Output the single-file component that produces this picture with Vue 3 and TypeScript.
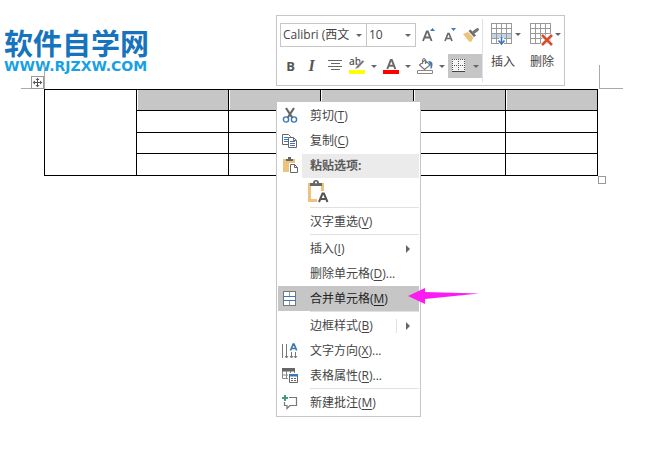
<script setup lang="ts">
import { ref } from 'vue'

interface MenuItem {
  id: string
  label: string
  key: string
  tail?: string
  submenu?: boolean
  split?: boolean
  active?: boolean
}

const fontName = ref('Calibri (西文')
const fontSize = ref('10')

const groups: MenuItem[][] = [
  [{ id: 'reconvert', label: '汉字重选', key: 'V' }],
  [
    { id: 'insert', label: '插入', key: 'I', submenu: true },
    { id: 'delete', label: '删除单元格', key: 'D', tail: '...' },
    { id: 'merge', label: '合并单元格', key: 'M', active: true },
  ],
  [
    { id: 'border', label: '边框样式', key: 'B', submenu: true, split: true },
    { id: 'direction', label: '文字方向', key: 'X', tail: '...' },
    { id: 'props', label: '表格属性', key: 'R', tail: '...' },
  ],
  [{ id: 'comment', label: '新建批注', key: 'M' }],
]
</script>

<template>
  <main class="page">
    <header class="logo">
      <div class="logo-name">软件自学网</div>
      <div class="logo-url">WWW.RJZXW.COM</div>
    </header>

    <section class="document">
      <table class="grid" aria-label="文档表格">
        <tbody>
          <tr v-for="r in 4" :key="r">
            <td v-if="r === 1" rowspan="4"></td>
            <td v-for="c in 5" :key="c" :class="{ selected: r === 1 }"></td>
          </tr>
        </tbody>
      </table>
      <span class="corner corner-left"></span>
      <span class="corner corner-right"></span>
      <button class="move-handle" type="button" aria-label="移动表格">
        <svg width="11" height="11" viewBox="0 0 11 11">
          <path d="M5.500 2v7M2 5.500h7" stroke="#555" fill="none" />
          <path d="M5.500 .7 7.500 3h-4zM5.500 10.300 7.500 8h-4zM.7 5.500 3 3.500v4zM10.300 5.500 8 3.500v4z" fill="#555" />
        </svg>
      </button>
      <span class="size-handle"></span>
    </section>

    <div class="toolbar" role="toolbar" aria-label="浮动工具栏">
      <div class="format">
        <div class="row fields">
          <label class="field font-field">
            <select v-model="fontName" aria-label="字体"><option>Calibri (西文</option></select>
            <i class="caret"></i>
          </label>
          <label class="field size-field">
            <select v-model="fontSize" aria-label="字号"><option>10</option></select>
            <i class="caret"></i>
          </label>
          <button class="tool" type="button" aria-label="增大字号">
            <svg width="16" height="16" viewBox="0 0 16 16">
              <path d="M2 14 5.800 4.500h1L10.600 14M3.500 10.500h6" fill="none" stroke="#6a6a6a" stroke-width="1.900" />
              <path d="M9 4 11.500 1 14 4z" fill="#3b78b5" />
            </svg>
          </button>
          <button class="tool" type="button" aria-label="减小字号">
            <svg width="16" height="16" viewBox="0 0 16 16">
              <path d="M3 14 6 6.500h1L10 14M4 11.500h5" fill="none" stroke="#6a6a6a" stroke-width="1.700" />
              <path d="M9 1 11.500 4 14 1z" fill="#3b78b5" />
            </svg>
          </button>
          <button class="tool" type="button" aria-label="格式刷">
            <svg width="17" height="16" viewBox="0 0 17 16">
              <path d="M0 7 5 5 10.500 10.500 8 15 6 14.500z" fill="#edc27c" />
              <path d="M5.500 4 7.500 2.500 13 8.500 11 10z" fill="#6a6a6a" />
              <path d="M10.500 5.500 14.500 2.500" stroke="#777" stroke-width="3" stroke-linecap="round" />
            </svg>
          </button>
        </div>
        <div class="row buttons">
          <button class="letter bold" type="button" aria-label="加粗">B</button>
          <button class="letter italic" type="button" aria-label="倾斜">I</button>
          <button class="tool align" type="button" aria-label="居中">
            <svg width="15" height="16" viewBox="0 0 15 16" shape-rendering="crispEdges">
              <path d="M1 2.500h14M4 5.500h9M1 8.500h14M4 11.500h9" stroke="#666" />
            </svg>
          </button>
          <button class="tool drop" type="button" aria-label="突出显示">
            <svg class="marker" width="16" height="18" viewBox="0 0 16 18">
              <text x="0" y="8" class="glyph-ab">ab</text>
              <path d="M5.500 12.500 7.500 9 13.500 3 15.500 4.500 9.500 11z" fill="#777" stroke="#fff" stroke-width=".7" />
              <path d="M0 13h16v4H0z" fill="#ffff00" />
            </svg>
            <i class="caret"></i>
          </button>
          <button class="tool drop" type="button" aria-label="字体颜色">
            <svg width="16" height="18" viewBox="0 0 16 18">
              <path d="M4.300 12 7.800 3h1L12.300 12M5.500 8.800h6" fill="none" stroke="#6a6a6a" stroke-width="2" />
              <path d="M0 13h16v4H0z" fill="#ff0000" />
            </svg>
            <i class="caret"></i>
          </button>
          <button class="tool drop" type="button" aria-label="底纹">
            <svg width="16" height="18" viewBox="0 0 16 18">
              <path d="M2.500 8 8 3l5 5-5.500 4.500zM5.500 7V3q1.500-3 3 0v4" fill="#fff" stroke="#777" stroke-width="1.200" />
              <path d="M11 4q5 0 4.500 4 0 3-2 4V8z" fill="#3b78b5" />
              <path d="M.5 13.500h15v3H.5z" fill="#fff" stroke="#888" />
            </svg>
            <i class="caret"></i>
          </button>
          <button class="tool drop pressed" type="button" aria-label="边框">
            <svg width="16" height="16" viewBox="0 0 16 16" shape-rendering="crispEdges">
              <path d="M1 1h13v12H1z" fill="#f4f4f4" />
              <path d="M1 1.500h13M1 7.500h13M1.500 1v12M7.500 1v12M13.500 1v12" stroke="#555" stroke-dasharray="1 1" />
              <path d="M1 13.500h13" stroke="#444" />
            </svg>
            <i class="caret"></i>
          </button>
        </div>
      </div>
      <div class="table-tools">
        <button class="big" type="button">
          <span class="big-icon">
            <svg width="22" height="23" viewBox="0 0 22 23">
              <path d="M1 11h20v5H1z" fill="#c2d4e9" />
              <path d="M.5.5h20v20H.5zM5.500.5v20M10.500.5v20M15.500.5v20M.5 5.500h20M.5 10.500h20M.5 15.500h20" fill="none" stroke="#999" shape-rendering="crispEdges" />
              <path d="M8 15h5v7H8z" fill="#fff" />
              <path d="M10.500 14v7M7.500 17.500l3 3.500 3-3.500" fill="none" stroke="#3b78b5" stroke-width="1.600" />
            </svg>
            <i class="caret"></i>
          </span>
          <span>插入</span>
        </button>
        <button class="big" type="button">
          <span class="big-icon">
            <svg width="23" height="23" viewBox="0 0 23 23">
              <path d="M.5.5h20v20H.5zM5.500.5v20M10.500.5v20M15.500.5v20M.5 5.500h20M.5 10.500h20M.5 15.500h20" fill="none" stroke="#999" shape-rendering="crispEdges" />
              <path d="M12 12 22 22M22 12 12 22" stroke="#fff" stroke-width="4.500" />
              <path d="M12 12 22 22M22 12 12 22" stroke="#d2502d" stroke-width="2.600" />
            </svg>
            <i class="caret"></i>
          </span>
          <span>删除</span>
        </button>
      </div>
    </div>

    <nav class="menu" aria-label="快捷菜单">
      <button class="item" type="button">
        <span class="icon">
          <svg width="16" height="17" viewBox="0 0 16 17">
            <path d="M4 1 10.500 11M12 1 5.500 11" stroke="#666" stroke-width="2.200" />
            <circle cx="4" cy="12.500" r="2.600" fill="none" stroke="#3b78b5" stroke-width="1.400" />
            <circle cx="12" cy="12.500" r="2.600" fill="none" stroke="#3b78b5" stroke-width="1.400" />
          </svg>
        </span>
        <span>剪切(<u>T</u>)</span>
      </button>
      <button class="item" type="button">
        <span class="icon">
          <svg width="16" height="16" viewBox="0 0 16 16">
            <path d="M.5 1.500h6l2 2v8h-8z" fill="#fff" stroke="#666" />
            <path d="M2 4.500h4M2 6.500h4M2 8.500h4" stroke="#3b78b5" />
            <path d="M6.500 4.500h5l3 3v7h-8z" fill="#fff" stroke="#666" />
            <path d="M11.500 4.500v3h3" fill="none" stroke="#666" />
            <path d="M8 8.500h5M8 10.500h5M8 12.500h5" stroke="#3b78b5" />
          </svg>
        </span>
        <span>复制(<u>C</u>)</span>
      </button>
      <div class="item heading">
        <span class="icon">
          <svg width="16" height="17" viewBox="0 0 16 17">
            <path d="M1 2h12v13H1z" fill="#edc27c" />
            <path d="M4 4V2h2V0h3v2h2v2z" fill="#666" />
            <path d="M7 6h6l3 3v7H7z" fill="#fff" />
            <path d="M8.500 7.500h4l3 3v5h-7z" fill="#fff" stroke="#666" />
            <path d="M12.500 7.500v3h3" fill="none" stroke="#666" />
          </svg>
        </span>
        <strong>粘贴选项:</strong>
      </div>
      <div class="paste">
        <button type="button" aria-label="只保留文本">
          <svg width="22" height="24" viewBox="0 0 22 24">
            <path d="M1 3h16v19H1z" fill="#edc27c" />
            <path d="M4 6h10v13H4z" fill="#fff" />
            <path d="M10 11h12v13H10z" fill="#fff" />
            <path d="M3 6V3h3q0-3 3-3t3 3h3v3z" fill="#666" />
            <circle cx="9" cy="2.500" r="1" fill="#fff" />
            <path d="M12 22 15.500 13.500h1.400L20.500 22M13.500 19h6" fill="none" stroke="#555" stroke-width="2" />
          </svg>
        </button>
      </div>
      <template v-for="(group, g) in groups" :key="g">
        <hr />
        <button
          v-for="item in group"
          :key="item.id"
          class="item"
          :class="{ active: item.active, split: item.split }"
          type="button"
        >
          <span class="icon">
            <svg v-if="item.id === 'merge'" width="14" height="15" viewBox="0 0 14 15" shape-rendering="crispEdges">
              <path d="M.5.5h12v14H.5z" fill="#fff" stroke="#777" />
              <path d="M6.500 1v4M6.500 10v4" stroke="#999" />
              <path d="M0 5.500h13M0 9.500h13" stroke="#3b78b5" />
            </svg>
            <svg v-else-if="item.id === 'direction'" width="16" height="16" viewBox="0 0 16 16">
              <path d="M.5 1v14M4.500 1v14M9.500 9v6M13.500 9v6" stroke="#777" />
              <path d="M8 13l1.500 2L11 13M12 13l1.500 2 1.500-2M3 13l1.500 2L6 13" fill="none" stroke="#777" />
              <path d="M8.500 7.500 11.200 1h.8l2.700 6.500M9.500 5.500h4" fill="none" stroke="#3b78b5" stroke-width="1.700" />
            </svg>
            <svg v-else-if="item.id === 'props'" width="16" height="16" viewBox="0 0 16 16">
              <path d="M.5.5h12v10H.5zM4.500 3v8M8.500 3v8M1 7h12" fill="none" stroke="#888" />
              <path d="M0 0h13v3.500H0z" fill="#666" />
              <path d="M6 5h10v10H6z" fill="#fff" />
              <path d="M7.500 6.500h8v8h-8z" fill="#fff" stroke="#666" />
              <path d="M7 6h9v2.500H7z" fill="#3b78b5" />
              <path d="M9 10.500h2M12 10.500h2M9 12.500h2M12 12.500h2" stroke="#666" />
            </svg>
            <svg v-else-if="item.id === 'comment'" width="16" height="16" viewBox="0 0 16 16">
              <path d="M7 2.500h7.500v8H8l-3 3v-3H2.500V7" fill="none" stroke="#777" stroke-width="1.200" />
              <path d="M3 0v6M0 3h6" stroke="#479b7c" stroke-width="2" />
            </svg>
          </span>
          <span>{{ item.label }}(<u>{{ item.key }}</u>){{ item.tail }}</span>
          <span v-if="item.submenu" class="submenu"><i></i></span>
        </button>
      </template>
    </nav>

    <svg class="pointer" width="72" height="16" viewBox="0 0 72 16" aria-hidden="true">
      <path d="M0 8 17 0v4L71 5.500 17 11v5z" fill="#fb1cf3" />
    </svg>
  </main>
</template>

<style>
body {
  margin: 0;
  background: #fff;
}
</style>

<style scoped>
.page {
  position: relative;
  min-height: 100vh;
  box-sizing: border-box;
  padding-top: 26px;
  font: 12px/16px "Open Sans", "Noto Sans CJK SC", sans-serif;
  color: #444;
}
button {
  margin: 0;
  padding: 0;
  border: 0;
  background: none;
  font: inherit;
  color: inherit;
}
svg {
  display: block;
  flex: none;
}
.logo {
  height: 63px;
  padding-left: 4px;
  white-space: nowrap;
}
.logo-name {
  font: 700 29px/32px "Noto Sans CJK SC", sans-serif;
  color: #1773bb;
}
.logo-url {
  font: 700 14px/16px "DejaVu Sans", sans-serif;
  color: #18a0e6;
}
.document {
  position: relative;
  margin: 0 70px 0 44px;
}
.grid {
  width: 100%;
  table-layout: fixed;
  border-collapse: collapse;
}
.grid td {
  height: 21px;
  padding: 0;
  border: 1px solid #000;
}
.grid tr:nth-child(odd) td {
  height: 20px;
}
.grid .selected {
  background: #c6c6c6;
  box-shadow: inset 1px 0 #fff;
}
.corner {
  position: absolute;
  top: -24px;
  width: 23px;
  height: 23px;
  border-bottom: 1px solid #aaa;
}
.corner-left {
  right: calc(100% - 1px);
  border-right: 1px solid #aaa;
}
.corner-right {
  left: calc(100% + 1px);
  border-left: 1px solid #aaa;
}
.move-handle {
  position: absolute;
  top: -13px;
  left: -13px;
  border: 1px solid #999;
  background: #fff;
}
.size-handle {
  position: absolute;
  top: 100%;
  left: 100%;
  width: 6px;
  height: 6px;
  border: 1px solid #999;
}
.toolbar {
  position: absolute;
  top: 15px;
  left: 276px;
  display: flex;
  border: 1px solid #c6c6c6;
  background: #fff;
  padding: 3px 0;
}
.format {
  display: flex;
  flex-direction: column;
  gap: 7px;
  padding: 4px 0 4px 3px;
  border-right: 1px solid #e1e1e1;
}
.row {
  display: flex;
  align-items: center;
}
.fields .tool {
  margin-left: 5px;
}
.field {
  position: relative;
  display: flex;
  box-sizing: border-box;
  height: 24px;
  border: 1px solid #c6c6c6;
}
.font-field {
  width: 87px;
}
.size-field {
  width: 50px;
  margin-left: -1px;
}
.field select {
  width: 100%;
  padding: 0 2px;
  border: 0;
  background: none;
  appearance: none;
  font: inherit;
  color: #444;
}
.field .caret {
  position: absolute;
  top: 10px;
  right: 4px;
}
.caret {
  width: 0;
  border: 3px solid transparent;
  border-top-color: #666;
  border-bottom: 0;
}
.letter {
  width: 21px;
  height: 24px;
  font-size: 13px;
  font-weight: 700;
  color: #555;
}
.italic {
  font-family: "Liberation Serif", serif;
  font-size: 16px;
  font-style: italic;
}
.align {
  margin: 0 4px 0 5px;
}
.drop {
  display: flex;
  align-items: center;
  gap: 6px;
  box-sizing: border-box;
  width: 34px;
  height: 24px;
  padding-left: 3px;
}
.pressed {
  background: #c6c6c6;
}
.marker {
  overflow: visible;
}
.glyph-ab {
  font: 600 10px "Open Sans", sans-serif;
  fill: #555;
}
.table-tools {
  display: flex;
  gap: 9px;
  padding: 4px 3px 0 8px;
}
.big {
  display: flex;
  flex-direction: column;
  align-items: flex-start;
  gap: 8px;
}
.big-icon {
  display: flex;
  align-items: center;
  gap: 2px;
}
.menu {
  position: absolute;
  top: 101px;
  left: 276px;
  width: 141px;
  padding: 1px;
  border: 1px solid #c6c6c6;
  background: #fff;
}
.item {
  display: flex;
  align-items: center;
  width: 100%;
  height: 25px;
  text-align: left;
  white-space: nowrap;
}
.icon {
  display: flex;
  align-items: center;
  justify-content: center;
  flex: none;
  width: 24px;
  height: 24px;
  margin-right: 8px;
}
.item u {
  text-underline-offset: 2px;
}
.heading .icon {
  margin-right: 0;
}
.heading strong {
  flex: 1;
  padding-left: 8px;
  line-height: 24px;
  color: #5a5a5a;
  background: #ebebeb;
}
.paste {
  height: 29px;
  padding-left: 29px;
}
.paste button {
  padding-top: 2px;
}
.active {
  background: #c6c6c6;
  color: #222;
}
.submenu {
  display: flex;
  align-items: center;
  height: 14px;
  margin-left: auto;
  padding: 0 9px;
}
.submenu i {
  border: 4px solid transparent;
  border-left-color: #666;
  border-right: 0;
}
.split .submenu {
  border-left: 1px solid #e1e1e1;
}
hr {
  height: 1px;
  margin: 0 0 1px 32px;
  border: 0;
  background: #e1e1e1;
}
.pointer {
  position: absolute;
  top: 288px;
  left: 408px;
}
</style>
